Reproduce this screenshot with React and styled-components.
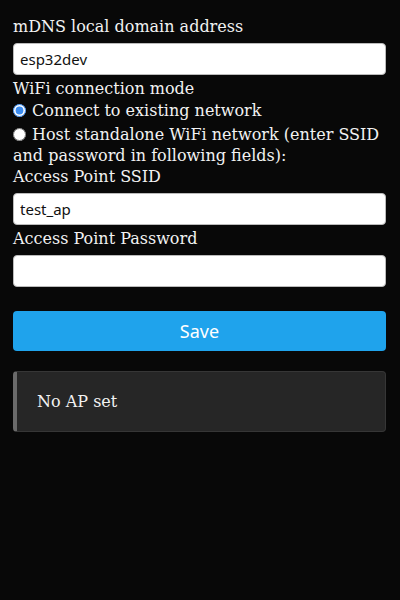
import styled, { createGlobalStyle } from 'styled-components';

const GlobalStyle = createGlobalStyle`
  html, body {
    margin: 0;
    background: #080808;
    color: #f2f2f2;
    font-family: 'DejaVu Serif', serif;
    font-size: 16px;
  }
`;

const Page = styled.form`
  padding: 16px 14px 0 13px;
  line-height: 21px;
`;

const Label = styled.div`
  display: block;
`;

const TextInput = styled.input`
  display: block;
  box-sizing: border-box;
  width: 100%;
  height: 32px;
  margin: 6px 0 3px;
  padding: 0 6px;
  background: #fff;
  color: #111;
  border: 1px solid #bbb;
  border-radius: 4px;
  font-family: 'Noto Sans', sans-serif;
  font-size: 15px;
  outline: none;
`;

const Option = styled.label`
  display: block;
  margin-top: ${({ gap }) => gap}px;
`;

const Radio = styled.input`
  width: 13px;
  height: 13px;
  margin: 0 6px 0 0;
  vertical-align: -1px;
  accent-color: #3b8cf0;
`;

const SaveButton = styled.button`
  display: block;
  width: 100%;
  height: 40px;
  margin-top: 24px;
  border: none;
  border-radius: 4px;
  background: #1fa3ec;
  color: #fff;
  font-family: 'Noto Sans', sans-serif;
  font-size: 18px;
  cursor: pointer;
`;

const Notice = styled.div`
  box-sizing: border-box;
  margin-top: 20px;
  height: 61px;
  display: flex;
  align-items: center;
  padding-left: 20px;
  background: #262626;
  border: 1px solid #363636;
  border-left: 4px solid #6a6a6a;
  border-radius: 4px;
`;

export default function App() {
  return (
    <>
      <GlobalStyle />
      <Page onSubmit={(e) => e.preventDefault()}>
        <Label>mDNS local domain address</Label>
        <TextInput defaultValue="esp32dev" />
        <Label>WiFi connection mode</Label>
        <Option gap={1}>
          <Radio type="radio" name="mode" defaultChecked />
          Connect to existing network
        </Option>
        <Option gap={3}>
          <Radio type="radio" name="mode" />
          Host standalone WiFi network (enter SSID and password in following fields):
        </Option>
        <Label>Access Point SSID</Label>
        <TextInput defaultValue="test_ap" />
        <Label>Access Point Password</Label>
        <TextInput type="password" />
        <SaveButton type="submit">Save</SaveButton>
        <Notice>No AP set</Notice>
      </Page>
    </>
  );
}
